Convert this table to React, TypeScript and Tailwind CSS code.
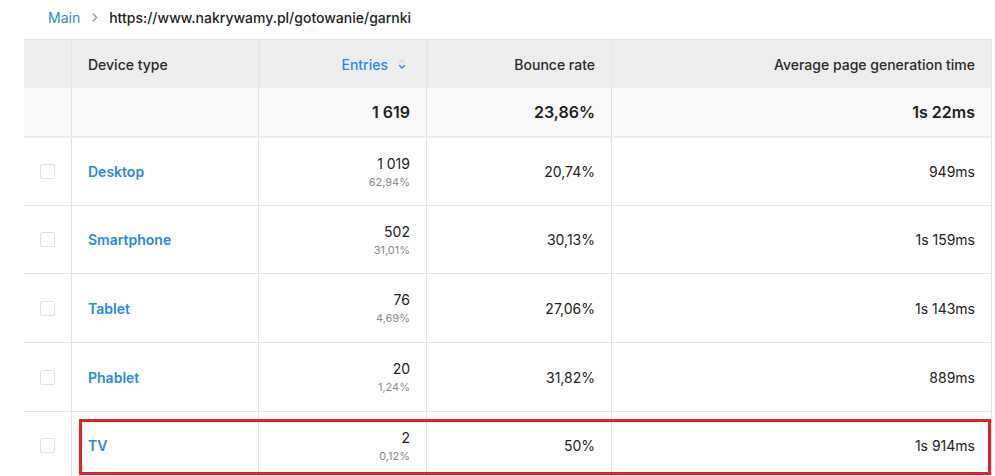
import React from 'react';

// wiersze tabeli
const rows = [
  { name: 'Desktop', entries: '1 019', share: '62,94%', bounce: '20,74%', time: '949ms', h: 'h-[68px]' },
  { name: 'Smartphone', entries: '502', share: '31,01%', bounce: '30,13%', time: '1s 159ms', h: 'h-[68px]' },
  { name: 'Tablet', entries: '76', share: '4,69%', bounce: '27,06%', time: '1s 143ms', h: 'h-[69px]' },
  { name: 'Phablet', entries: '20', share: '1,24%', bounce: '31,82%', time: '889ms', h: 'h-[69px]' },
  { name: 'TV', entries: '2', share: '0,12%', bounce: '50%', time: '1s 914ms', h: 'h-[68px]', marked: true },
];

const gridCols = 'grid grid-cols-[48px_187px_168px_185px_379px]';

const SortIcon = () => (
  <svg width="8" height="12" viewBox="0 0 8 12" fill="none">
    <path d="M1.5 4.5 L4 2 L6.5 4.5" stroke="#c7d9f2" strokeWidth="1.4" strokeLinecap="round" strokeLinejoin="round" />
    <path d="M1.5 7.5 L4 10 L6.5 7.5" stroke="#2f86e6" strokeWidth="1.4" strokeLinecap="round" strokeLinejoin="round" />
  </svg>
);

export default function App() {
  return (
    <div className="w-[995px] h-[476px] overflow-hidden bg-white text-[14px] text-[#222] font-['Inter','Noto_Sans',sans-serif]">
      <div className="flex items-center h-[34px] pl-[48px] pt-[1px]">
        <span className="text-[#2f86e6]">Main</span>
        <svg className="ml-[12px] mr-[11px]" width="6" height="9" viewBox="0 0 6 9" fill="none">
          <path d="M1.2 1 L4.6 4.5 L1.2 8" stroke="#9a9a9a" strokeWidth="1.4" strokeLinecap="round" strokeLinejoin="round" />
        </svg>
        <span className="font-medium text-[#1f1f1f]">https://www.nakrywamy.pl/gotowanie/garnki</span>
      </div>

      <div className="ml-[24px] mt-[5px] w-[968px] border-t border-r border-[#e3e3e3]">
        <div className={`${gridCols} h-[48px] bg-[#ededed] font-medium text-[#2a2a2a]`}>
          <div className="border-r border-[#e3e3e3]" />
          <div className="flex items-center pl-[16px] border-r border-[#e3e3e3]">Device type</div>
          <div className="flex items-center justify-end gap-[10px] pr-[20px] border-r border-[#e3e3e3] text-[#2f86e6]">
            <span>Entries</span>
            <SortIcon />
          </div>
          <div className="flex items-center justify-end pr-[16px] border-r border-[#e3e3e3]">Bounce rate</div>
          <div className="flex items-center justify-end pr-[16px]">Average page generation time</div>
        </div>

        <div className={`${gridCols} h-[50px] bg-[#f9f9f9] border-b-2 border-[#ececec] text-[16px] font-semibold`}>
          <div className="border-r border-[#e3e3e3]" />
          <div className="border-r border-[#e3e3e3]" />
          <div className="flex items-center justify-end pr-[16px] border-r border-[#e3e3e3]">1 619</div>
          <div className="flex items-center justify-end pr-[16px] border-r border-[#e3e3e3]">23,86%</div>
          <div className="flex items-center justify-end pr-[16px]">1s 22ms</div>
        </div>

        {rows.map((r) => (
          <div key={r.name} className={`${gridCols} ${r.h} relative border-b border-[#e3e3e3]`}>
            <div className="flex items-center justify-center border-r border-[#e3e3e3]">
              <span className="w-[15px] h-[15px] rounded-[2px] border border-[#e1e1e1] bg-white" />
            </div>
            <div className="flex items-center pl-[16px] border-r border-[#e3e3e3] font-semibold text-[#2f86e6]">
              {r.name}
            </div>
            <div className="flex flex-col items-end justify-center pr-[16px] border-r border-[#e3e3e3]">
              <span className="leading-[20px]">{r.entries}</span>
              <span className="text-[11px] leading-[16px] text-[#8a8a8a]">{r.share}</span>
            </div>
            <div className="flex items-center justify-end pr-[16px] border-r border-[#e3e3e3]">{r.bounce}</div>
            <div className="flex items-center justify-end pr-[16px]">{r.time}</div>
            {r.marked && (
              <div className="absolute left-[55px] top-[7px] w-[912px] h-[56px] border-[3px] border-[#e3202a] pointer-events-none" />
            )}
          </div>
        ))}
      </div>
    </div>
  );
}
